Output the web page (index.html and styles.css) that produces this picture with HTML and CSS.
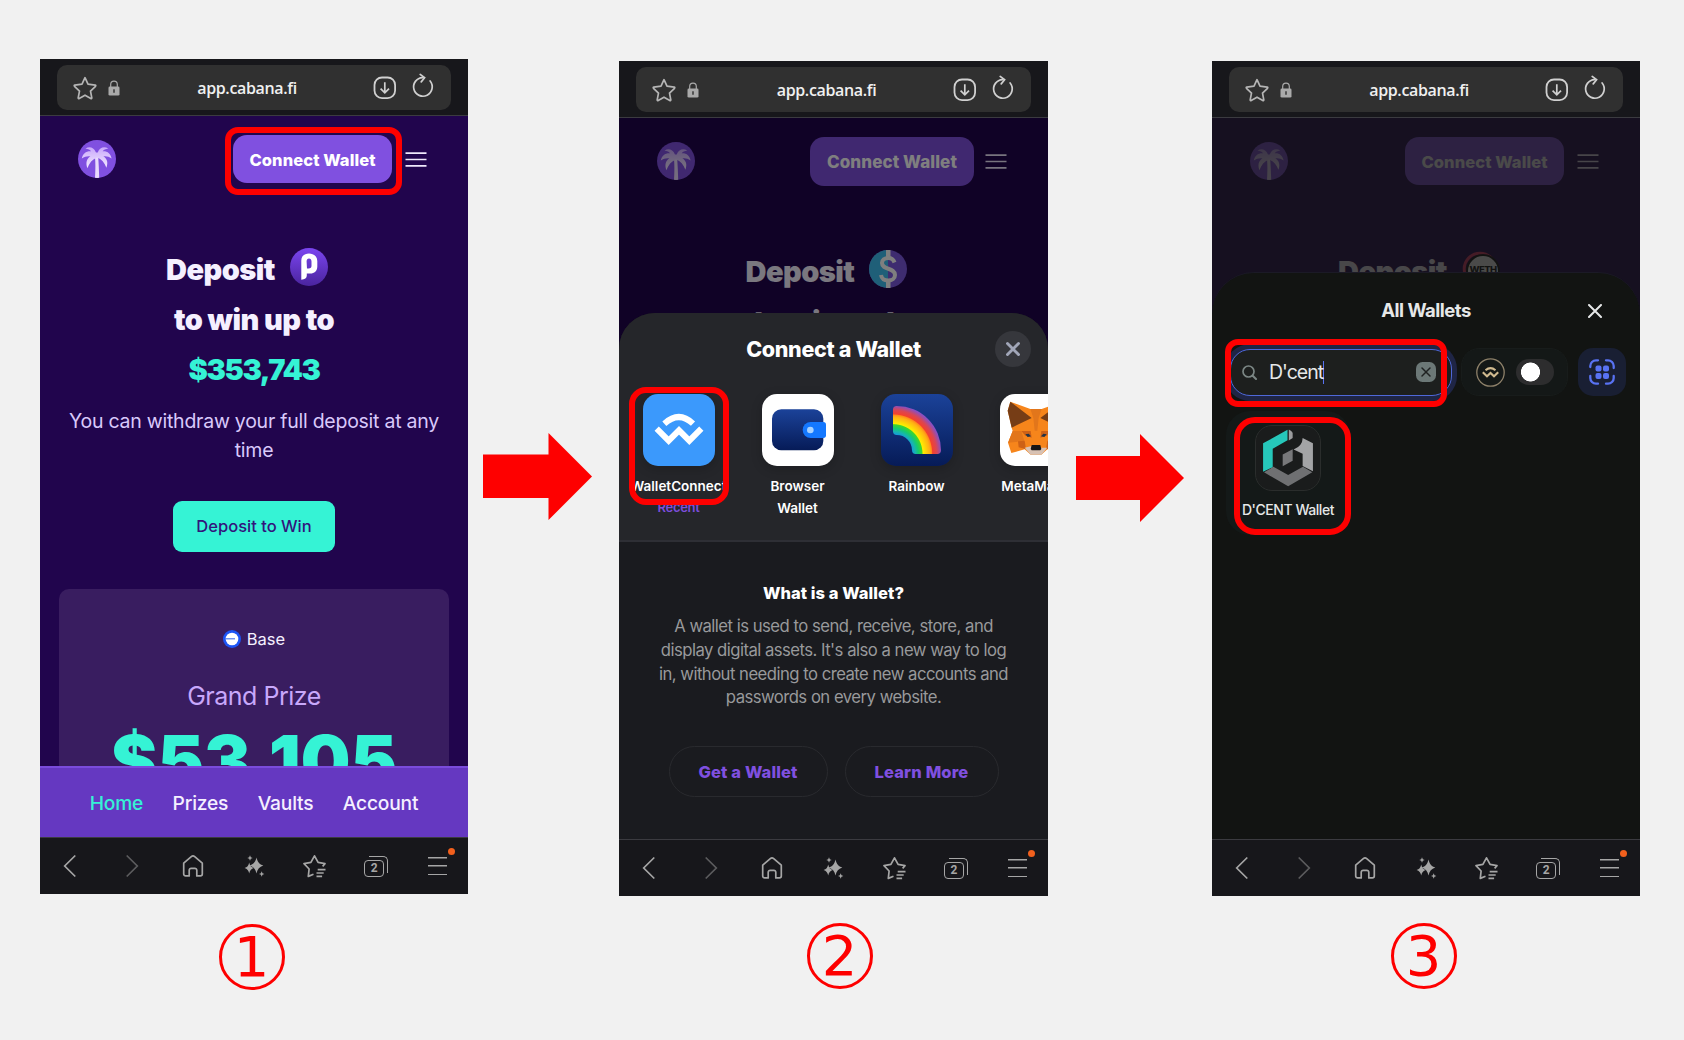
FILE: index.html
```html
<!DOCTYPE html>
<html lang="en">
<head>
<meta charset="utf-8">
<title>Connect a wallet in three steps</title>
<link rel="stylesheet" href="styles.css">
</head>
<body>
<svg class="defs" width="0" height="0" aria-hidden="true">
  <defs>
    <linearGradient id="violet" x1="0" y1="0" x2="0" y2="1"><stop offset="0" stop-color="#7b45f0"/><stop offset="1" stop-color="#4a249e"/></linearGradient>
    <linearGradient id="navy" x1="0" y1="0" x2="0" y2="1"><stop offset="0" stop-color="#1b4299"/><stop offset="1" stop-color="#061b57"/></linearGradient>
    <linearGradient id="frond" x1="0" y1="0" x2="0" y2="1"><stop offset="0" stop-color="#c9a8fb"/><stop offset="1" stop-color="#f3eaff"/></linearGradient>
    <radialGradient id="bow" gradientUnits="userSpaceOnUse" cx="849" cy="461" r="145">
      <stop offset=".4" stop-color="#149bd8"/><stop offset=".46" stop-color="#18b5b0"/><stop offset=".52" stop-color="#14c973"/><stop offset=".6" stop-color="#3fd52d"/><stop offset=".62" stop-color="#ffee00"/><stop offset=".76" stop-color="#ffb014"/><stop offset=".8" stop-color="#ff8a1c"/><stop offset=".82" stop-color="#f4412c"/><stop offset=".9" stop-color="#dc4550"/><stop offset="1" stop-color="#8a4fc0"/>
    </radialGradient>
    <symbol id="i-star" viewBox="0 0 24 24"><path d="M12 1.7l3 6.5 7.2.9c.6.1.8.8.3 1.2l-5 4.9 1.3 6.6c.1.6-.5 1-1 .7L12 19.2l-5.8 3.3c-.5.3-1.1-.1-1-.7l1.3-6.6-5-4.9c-.5-.4-.3-1.1.3-1.2L9 8.2z" fill="none" stroke="#b5b5b5" stroke-width="1.7" stroke-linejoin="round"/></symbol>
    <symbol id="i-lock" viewBox="0 0 12 16"><path d="M2.7 7V4.5a3.3 3.3 0 0 1 6.6 0V7" fill="none" stroke="#aaa" stroke-width="1.2"/><rect x=".5" y="6.6" width="11" height="9" rx="1.3" fill="#aaa"/><path d="M6 9.3v3.4" stroke="#303030" stroke-width="1.4"/></symbol>
    <symbol id="i-down" viewBox="0 0 24 24"><rect x="1.5" y="1.5" width="20.6" height="20.6" rx="7.5" fill="none" stroke="#d0d0d0" stroke-width="1.8"/><path d="M11.8 6.3v10.400M7.600 12.600l4.200 4.200 4.200-4.200" fill="none" stroke="#d0d0d0" stroke-width="1.700"/></symbol>
    <symbol id="i-reload" viewBox="0 0 24 26"><path d="M12.500 4.600a9.300 9.300 0 1 0 7.600 3.400" fill="none" stroke="#d0d0d0" stroke-width="1.700" stroke-linecap="round"/><path d="M10.200 1.400l4.400 3.300-3.400 4.200" fill="none" stroke="#d0d0d0" stroke-width="1.700" stroke-linecap="round"/></symbol>
    <symbol id="i-palm" viewBox="0 0 38 38">
      <circle cx="19" cy="19" r="19" fill="#8050e0"/>
      <path d="M17 17h3.200c.5 7 .8 13 1 20.800a19 19 0 0 1-4.200 0c.4-8 .6-14 0-20.800z" fill="#e9dafc"/>
      <path d="M18 12.500C15.500 7 11 6.200 7.500 8.800c3 .2 4.500 1 5.500 2.400-5-.3-8.300 2.300-9.200 7.300 2.800-2 5.600-2.600 8.600-2.200-3.900 2.700-4.900 6.700-3 12 1.800-5.300 4.900-9 9.600-10.800 4.600 1.600 7.600 5 9.400 10.300 1.900-5.300.9-8.800-3-11.500 3-.4 5.600.2 8.200 2.200-.9-5-4-7.600-8.900-7.300 1-1.400 2.600-2.200 5.600-2.400-3.600-2.600-8.400-1.800-10.600 3.700z" fill="url(#frond)"/>
    </symbol>
    <symbol id="i-menu" viewBox="0 0 22 15"><path d="M.5 1.200h21M.5 7.500h21M.5 13.800h21" stroke="#efe8fc" stroke-width="1.700"/></symbol>
    <symbol id="i-back" viewBox="0 0 24 24"><path d="M16.300 1.500L5.700 12l10.600 10.500" fill="none" stroke="#a6a6a6" stroke-width="1.700"/></symbol>
    <symbol id="i-fwd" viewBox="0 0 24 24"><path d="M6.700 1.500L17.300 12 6.700 22.500" fill="none" stroke="#5c5c5e" stroke-width="1.700"/></symbol>
    <symbol id="i-home" viewBox="0 0 24 24"><path d="M2.700 9.200L10.300 2.600a2.600 2.600 0 0 1 3.400 0l7.600 6.600V20a1.900 1.900 0 0 1-1.900 1.900h-3.600v-5.600a1.900 1.900 0 0 0-1.900-1.900h-3.800a1.900 1.900 0 0 0-1.900 1.900v5.600H4.600A1.900 1.900 0 0 1 2.700 20z" fill="none" stroke="#a6a6a6" stroke-width="1.700" stroke-linejoin="round"/></symbol>
    <symbol id="i-spark" viewBox="0 0 24 24" fill="#a6a6a6"><path d="M14.500 3.500c1 4.500 3 7 6.800 8-3.800 1.200-5.800 3.600-6.800 8-1-4.400-3-6.800-6.800-8 3.800-1 5.800-3.500 6.800-8z"/><path d="M7.200 8.500c.6 3.200 2 4.700 4.600 5.400-2.600.8-4 2.400-4.600 5.600-.6-3.200-2-4.800-4.600-5.600 2.600-.7 4-2.200 4.600-5.400z"/><path d="M8 1.200l.8 2 1.900.8-1.900.8-.8 2-.8-2L5.300 4l1.900-.8zM19.700 17.200l.8 2 1.900.8-1.900.8-.8 2-.8-2-1.900-.8 1.900-.8z"/></symbol>
    <symbol id="i-fav" viewBox="0 0 24 24" fill="none" stroke="#a6a6a6" stroke-width="1.700" stroke-linejoin="round"><path d="M10.500 20.200L5.300 22.400 6.100 15 1 9.700l6.900-1.300L11.500 1.800l3.600 6.600 6.900 1.300-2.400 2.700"/><path d="M14.700 15.700h7.800M13.500 19h7.200M13.500 22.300h5.600"/></symbol>
    <symbol id="i-qr" viewBox="0 0 26 26"><path d="M1.300 8V7A5.700 5.700 0 0 1 7 1.300h2M17 1.300h2A5.700 5.700 0 0 1 24.700 7v2M24.700 17v2a5.700 5.700 0 0 1-5.700 5.700h-2M9 24.700H7A5.700 5.700 0 0 1 1.300 19v-2" fill="none" stroke="#5872f2" stroke-width="2.300" stroke-linecap="round"/><g fill="#5872f2"><rect x="6.500" y="6.500" width="6" height="6" rx="2"/><rect x="14" y="6.500" width="6" height="6" rx="2"/><rect x="6.500" y="14" width="6" height="6" rx="2"/><rect x="14" y="14" width="6" height="6" rx="2"/></g></symbol>
  </defs>
</svg>

<main class="guide">
  <section class="step step-one">
    <div class="phone">
      <header class="browser-bar"><div class="address">
        <svg class="a-star"><use href="#i-star"/></svg><svg class="a-lock"><use href="#i-lock"/></svg>
        <span class="url">app.cabana.fi</span>
        <svg class="a-down"><use href="#i-down"/></svg><svg class="a-reload"><use href="#i-reload"/></svg>
      </div></header>
      <div class="view">
        <div class="page">
          <div class="site-head">
            <svg class="palm"><use href="#i-palm"/></svg>
            <div class="connect">Connect Wallet</div>
            <svg class="burger"><use href="#i-menu"/></svg>
          </div>
          <div class="hero">
            <div class="hero-line with-token"><span>Deposit</span>
              <svg class="token" viewBox="0 0 38 38"><circle cx="19" cy="19" r="19" fill="url(#violet)"/><path d="M11.300 31.800V12.500C11.300 8 14.500 5.500 19 5.500S27.300 8.300 27.300 13v5.500c0 4.500-3 7-7 7h-3.500v2c0 2.500-2 4-5.500 4.300zM17 20.500h1.700c1.800 0 2.800-1 2.800-2.700v-4.300c0-2-1-3-2.500-3s-2.400 1-2.400 3z" fill="#fff" fill-rule="evenodd"/></svg>
            </div>
            <div class="hero-line win">to win up to</div>
            <div class="hero-line amount">$353,743</div>
            <p class="note">You can withdraw your full deposit at any<br>time</p>
            <div class="deposit">Deposit to Win</div>
          </div>
          <div class="prize">
            <div class="chain"><svg class="base" viewBox="0 0 18 18"><circle cx="9" cy="9" r="9" fill="#1d55f5"/><circle cx="9" cy="9" r="6.300" fill="#fff"/><path d="M2 8.800h10" stroke="#4e7bee" stroke-width="1.200"/></svg><span>Base</span></div>
            <div class="prize-title">Grand Prize</div>
            <div class="prize-amount">$53,105</div>
          </div>
        </div>
        <nav class="tabs"><span class="active">Home</span><span>Prizes</span><span>Vaults</span><span>Account</span></nav>
      </div>
      <footer class="toolbar"><svg><use href="#i-back"/></svg><svg><use href="#i-fwd"/></svg><svg><use href="#i-home"/></svg><svg><use href="#i-spark"/></svg><svg><use href="#i-fav"/></svg><span class="pages">2</span><span class="more"></span></footer>
      <div class="mark mark-connect"></div>
    </div>
    <div class="number">1</div>
  </section>

  <svg class="arrow arrow-one" viewBox="0 0 109 87"><path d="M0 21.500h65.500V0L109 43.500 65.500 87V65H0z" fill="#fe0000"/></svg>

  <section class="step step-two">
    <div class="phone">
      <header class="browser-bar"><div class="address">
        <svg class="a-star"><use href="#i-star"/></svg><svg class="a-lock"><use href="#i-lock"/></svg>
        <span class="url">app.cabana.fi</span>
        <svg class="a-down"><use href="#i-down"/></svg><svg class="a-reload"><use href="#i-reload"/></svg>
      </div></header>
      <div class="view">
        <div class="page">
          <div class="site-head">
            <svg class="palm"><use href="#i-palm"/></svg>
            <div class="connect">Connect Wallet</div>
            <svg class="burger"><use href="#i-menu"/></svg>
          </div>
          <div class="hero">
            <div class="hero-line with-token"><span>Deposit</span>
              <svg class="token" viewBox="0 0 38 38"><circle cx="19" cy="19" r="19" fill="#7c58e0"/><path d="M19 0a19 19 0 0 0 0 38z" fill="#3fbff0"/><path d="M25.500 12.500C24.500 9.500 22.500 8 19.300 8c-3.800 0-6.300 2-6.300 5 0 7.500 13 4 13 12 0 3.300-2.800 5.500-6.700 5.500-4 0-6.700-2-7.300-5.500" fill="none" stroke="#fff" stroke-width="4"/><path d="M17 0h4.500v8H17zM17 31h4.500v7H17z" fill="#fff"/></svg>
            </div>
            <div class="hero-line win">to win up to</div>
          </div>
        </div>
        <div class="scrim"></div>
        <div class="sheet connect-sheet">
          <div class="sheet-top">
            <div class="sheet-head">Connect a Wallet<svg class="close" viewBox="0 0 36 36"><circle cx="18" cy="18" r="18" fill="#36373c"/><path d="M12.500 12.500l11 11M23.500 12.500l-11 11" stroke="#a1a6b8" stroke-width="2.900" stroke-linecap="round"/></svg></div>
            <div class="wallets">
              <div class="wallet"><svg class="tile" viewBox="98 282 216 216"><rect x="98" y="282" width="216" height="216" fill="#3b99fc"/><path d="M162 371q44-40 86 0M139 386l36 36 31-31 31 31 36-36" fill="none" stroke="#fff" stroke-width="18"/></svg><div class="label">WalletConnect</div><div class="recent">Recent</div></div>
              <div class="wallet"><svg class="tile" viewBox="456 282 216 216"><rect x="456" y="282" width="216" height="216" fill="#fff"/><rect x="486" y="328" width="154" height="123" rx="28" fill="url(#navy)"/><path d="M602 366h38q8 0 8 8v32q0 8-8 8h-38a24 24 0 0 1 0-48z" fill="#1478ff"/><circle cx="601" cy="390" r="10" fill="#a8d2ff"/></svg><div class="label two">Browser<br>Wallet</div></div>
              <div class="wallet"><svg class="tile" viewBox="813 282 216 216"><rect x="813" y="282" width="216" height="216" fill="url(#navy)"/><path d="M849 329q0-11 11-11A133 133 0 0 1 993 451q0 11-11 11H917q-11 0-11-11A46 46 0 0 0 860 405q-11 0-11-11z" fill="url(#bow)"/></svg><div class="label">Rainbow</div></div>
              <div class="wallet"><svg class="tile" viewBox="0 27 216 216"><rect y="27" width="216" height="216" fill="#fff"/>
                <path d="M31 50l60 22h34l60-22 8 27-12 51-3 10 14 35-10 31-40-11-18 16H92l-18-16-40 11-10-31 14-35-3-10-12-51z" fill="#f6851b"/>
                <path d="M31 50l64 49-60 29-12-51zM185 50l-64 49 60 29 12-51z" fill="#763d16"/>
                <path d="M24 173l14-35 26 0 9 30zM192 173l-14-35-26 0-9 30zM91 72h34l-9 27-4 38h-8l-4-38z" fill="#e2761b"/>
                <path d="M64 138l12 14 19 6-3-20zM152 138l-12 14-19 6 3-20zM54 169l20-2 4 26-22-6zM162 169l-20-2-4 26 22-6z" fill="#cd6116"/>
                <path d="M76 148l10-2 7 8-10 2zM140 148l-10-2-7 8 10 2z" fill="#233447"/>
                <path d="M74 188l18-4 16 8 16-4 18 0-18 21H92z" fill="#d7c1b3"/><path d="M95 180h26l3 12-3 4H95l-3-4z" fill="#161616"/></svg><div class="label">MetaMask</div></div>
            </div>
          </div>
          <div class="about">
            <div class="about-title">What is a Wallet?</div>
            <p class="about-text">A wallet is used to send, receive, store, and<br>display digital assets. It's also a new way to log<br>in, without needing to create new accounts and<br>passwords on every website.</p>
            <div class="about-actions"><div class="pill get">Get a Wallet</div><div class="pill learn">Learn More</div></div>
          </div>
        </div>
      </div>
      <footer class="toolbar"><svg><use href="#i-back"/></svg><svg><use href="#i-fwd"/></svg><svg><use href="#i-home"/></svg><svg><use href="#i-spark"/></svg><svg><use href="#i-fav"/></svg><span class="pages">2</span><span class="more"></span></footer>
      <div class="mark mark-wc"></div>
    </div>
    <div class="number">2</div>
  </section>

  <svg class="arrow arrow-two" viewBox="0 0 108 88"><path d="M0 22h64V0l44 44-44 44V66H0z" fill="#fe0000"/></svg>

  <section class="step step-three">
    <div class="phone">
      <header class="browser-bar"><div class="address">
        <svg class="a-star"><use href="#i-star"/></svg><svg class="a-lock"><use href="#i-lock"/></svg>
        <span class="url">app.cabana.fi</span>
        <svg class="a-down"><use href="#i-down"/></svg><svg class="a-reload"><use href="#i-reload"/></svg>
      </div></header>
      <div class="view">
        <div class="page">
          <div class="site-head">
            <svg class="palm"><use href="#i-palm"/></svg>
            <div class="connect">Connect Wallet</div>
            <svg class="burger"><use href="#i-menu"/></svg>
          </div>
          <div class="hero">
            <div class="hero-line with-token"><span>Deposit</span>
              <svg class="token" viewBox="0 0 38 38"><circle cx="18" cy="19" r="15.800" fill="none" stroke="#e8386a" stroke-width="3"/><circle cx="21" cy="21" r="16" fill="#fff" stroke="#111" stroke-width="2"/><text x="21" y="22.500" text-anchor="middle" class="weth">WETH</text></svg>
            </div>
          </div>
        </div>
        <div class="scrim"></div>
        <div class="sheet all-sheet">
          <div class="all-head">All Wallets<svg class="all-close" viewBox="0 0 14 14"><path d="M1 1l12 12M13 1L1 13" stroke="#e6e8e8" stroke-width="2" stroke-linecap="round"/></svg></div>
          <div class="filters">
            <div class="search"><svg class="lens" viewBox="0 0 15 15"><circle cx="6.500" cy="6.500" r="5.500" fill="none" stroke="#7b8684" stroke-width="1.700"/><path d="M10.700 10.700l3.300 3.300" stroke="#7b8684" stroke-width="2" stroke-linecap="round"/></svg><span class="query">D'cent</span><svg class="clear" viewBox="0 0 20 20"><rect width="20" height="20" rx="6.500" fill="#6c7877"/><path d="M6 6l8 8M14 6l-8 8" stroke="#1f2222" stroke-width="1.500" stroke-linecap="round"/></svg></div>
            <div class="certified"><svg class="seal" viewBox="0 0 29 29"><circle cx="14.500" cy="14.500" r="13.700" fill="none" stroke="#8d8069" stroke-width="1.300"/><path d="M9.500 12.300q5-4.300 10 0M6.800 14.300l4.200 4 3.500-3.300 3.500 3.300 4.200-4" fill="none" stroke="#cfb98f" stroke-width="2.100"/></svg><span class="switch"></span></div>
            <div class="qr"><svg class="qr-icon"><use href="#i-qr"/></svg></div>
          </div>
          <div class="result">
            <svg class="dcent" viewBox="165 316 199 199"><path d="M187 370l76-42v32l-46 27v57l-30 14z" fill="#26c7ba"/><path d="M267 327q12 6 12 12v14l-12 8z" fill="#9b9c9e"/><path d="M310 353l32 17v87l-32-17v-38l-28-13q28-12 28-36z" fill="#a3a4a6"/><path d="M248 405l31-17v36l-31 17z" fill="#77787a"/><path d="M190 460l29-17 46 25 46-25 29 17-75 43z" fill="#6f7072"/></svg>
            <span>D'CENT Wallet</span>
          </div>
        </div>
      </div>
      <footer class="toolbar"><svg><use href="#i-back"/></svg><svg><use href="#i-fwd"/></svg><svg><use href="#i-home"/></svg><svg><use href="#i-spark"/></svg><svg><use href="#i-fav"/></svg><span class="pages">2</span><span class="more"></span></footer>
      <div class="mark mark-search"></div>
      <div class="mark mark-dcent"></div>
    </div>
    <div class="number">3</div>
  </section>
</main>
</body>
</html>
```
FILE: styles.css
```css
* { box-sizing: border-box; }
body { margin: 0; background: #f1f1f1; font-family: Inter, "Liberation Sans", sans-serif; overflow: hidden; }
svg { display: block; flex: none; }
.defs { position: absolute; }
p { margin: 0; }
span { white-space: nowrap; }

.guide { display: flex; align-items: flex-start; width: 1684px; height: 1040px; padding: 59px 0 0 40px; }
.step { width: 428px; display: flex; flex-direction: column; align-items: center; flex: none; }
.step-two { width: 429px; margin: 2px 28px 0 27px; }
.step-three { margin: 2px 0 0 28px; }
.arrow-one { width: 109px; height: 87px; margin: 374px 0 0 15px; }
.arrow-two { width: 108px; height: 88px; margin-top: 375px; }

.number { width: 66px; height: 66px; margin: 30px 5px 0 0; border: 3px solid #fe0000; border-radius: 50%; color: #fe0000; font: 56px/60px "DejaVu Sans", sans-serif; text-align: center; }
.step-two .number { margin: 27px -12px 0 0; }
.step-three .number { margin-top: 27px; }

.phone { position: relative; width: 100%; height: 835px; display: flex; flex-direction: column; background: #17171b; }
.browser-bar { height: 57px; padding: 6px 17px 0; border-bottom: 1px solid #3b3b40; }
.address { height: 45px; border-radius: 10px; background: #303030; display: flex; align-items: center; padding: 0 17px 0 16px; }
.a-star { width: 24px; height: 24px; }
.a-lock { width: 12px; height: 16px; margin: 0 0 0 11px; }
.url { flex: 1; text-align: center; color: #f0f0f0; font: 600 16px/24px "Open Sans", sans-serif; letter-spacing: -.35px; padding-left: 1px; }
.a-down { width: 24px; height: 24px; margin-right: 13px; }
.a-reload { width: 24px; height: 26px; margin-top: -3px; }

.view { position: relative; flex: 1; min-height: 0; display: flex; flex-direction: column; overflow: hidden; background: #21054d; }
.page { flex: 1; min-height: 0; overflow: hidden; }
.site-head { height: 86px; display: flex; align-items: center; padding: 0 41px 0 38px; }
.palm { width: 38px; height: 38px; margin-right: auto; }
.connect { width: 159px; height: 48px; border-radius: 14px; background: #8050e0; color: #fff; font-size: 16.500px; font-weight: 800; line-height: 50px; letter-spacing: .1px; text-align: center; }
.step-two .connect { width: 164px; height: 49px; font-size: 17px; }
.burger { width: 22px; height: 15px; margin-left: 13px; }
.step-two .burger { margin-left: 11px; }

.hero { padding-top: 42px; display: flex; flex-direction: column; align-items: center; color: #f5f0ff; }
.hero-line { height: 50px; line-height: 51px; font-size: 29px; font-weight: 900; letter-spacing: -.55px; }
.with-token { display: flex; gap: 15px; padding-right: 14px; }
.token { width: 38px; height: 38px; margin-top: 4px; }
.amount { color: #35f3d5; letter-spacing: -1.400px; }
.note { margin-top: 13px; font-size: 19.500px; line-height: 28.500px; letter-spacing: -.25px; text-align: center; color: #d9c9fb; }
.deposit { width: 162px; height: 51px; margin-top: 37px; border-radius: 9px; background: #35f3d5; color: #32147c; font-size: 16.500px; font-weight: 500; line-height: 51px; text-align: center; }
.prize { height: 260px; margin: 37px 19px 0; padding-top: 38px; border-radius: 10px 10px 0 0; background: #391d60; text-align: center; }
.chain { height: 24px; display: flex; align-items: center; justify-content: center; gap: 6px; color: #f5f0ff; font-size: 16.500px; line-height: 24px; }
.base { width: 18px; height: 18px; }
.prize-title { margin-top: 30px; font-size: 25px; line-height: 30px; letter-spacing: -.5px; color: #c8a8fb; }
.prize-amount { margin-top: 15px; font-size: 70px; line-height: 70px; font-weight: 900; color: #35f3d5; }
.tabs { height: 71px; border-top: 2px solid #7a4bdc; background: #6538c1; display: flex; align-items: center; justify-content: center; gap: 29.500px; color: #f5f0ff; font-size: 19.200px; font-weight: 500; letter-spacing: -.2px; }
.active { color: #35f3d5; }

.toolbar { position: relative; height: 57px; border-top: 1px solid #3b3b40; background: #17171b; display: grid; grid-template-columns: repeat(7, 1fr); align-items: center; justify-items: center; }
.toolbar svg { width: 24px; height: 24px; }
.pages { position: relative; width: 20px; height: 17px; margin: 5px 4px 0 0; border: 1.500px solid #a6a6a6; border-radius: 4px; color: #a6a6a6; font: 700 12px/14px Roboto, sans-serif; text-align: center; }
.pages::after { content: ""; position: absolute; left: 4px; top: -5px; width: 18px; height: 16px; border: solid #a6a6a6; border-width: 1.500px 1.500px 0 0; border-radius: 0 5px 0 0; }
.more { position: relative; width: 19px; height: 18px; background: linear-gradient(#a6a6a6 0 0) 0 0/100% 1.500px no-repeat, linear-gradient(#a6a6a6 0 0) 0 50%/100% 1.500px no-repeat, linear-gradient(#a6a6a6 0 0) 0 100%/100% 1.500px no-repeat; }
.more::after { content: ""; position: absolute; right: -8px; top: -9px; width: 7px; height: 7px; border-radius: 50%; background: #f2601d; }

.mark { position: absolute; border: 6px solid #fe0000; }
.mark-connect { left: 185px; top: 68px; width: 177px; height: 68px; border-radius: 13px; }
.mark-wc { left: 10px; top: 326px; width: 100px; height: 118px; border-radius: 17px; }
.mark-search { left: 13px; top: 278px; width: 222px; height: 68px; border-radius: 13px; }
.mark-dcent { left: 22px; top: 356px; width: 117px; height: 118px; border-radius: 21px; }

.scrim { position: absolute; inset: 0; background: rgba(0, 0, 0, .5); }
.step-three .scrim { background: rgba(19, 20, 18, .77); }
.sheet { position: absolute; left: 0; right: 0; bottom: 0; overflow: hidden; }

.connect-sheet { height: 526px; border-radius: 36px 36px 0 0; background: #1a1b1f; }
.sheet-top { height: 229px; background: #25262a; border-bottom: 2px solid #2e2f35; }
.sheet-head { position: relative; height: 81px; padding-top: 21px; text-align: center; color: #fff; font-size: 21.500px; line-height: 30px; font-weight: 800; letter-spacing: -.33px; }
.close { position: absolute; right: 17px; top: 18px; width: 36px; height: 36px; }
.wallets { display: flex; gap: 24px; padding-left: 12px; }
.wallet { width: 95px; flex: none; display: flex; flex-direction: column; align-items: center; color: #fff; font-size: 13.500px; font-weight: 600; line-height: 21.500px; text-align: center; }
.tile { width: 72px; height: 72px; border-radius: 15px; box-shadow: 0 3px 12px rgba(0, 0, 0, .2); }
.label { width: 91px; height: 21px; margin-top: 10px; overflow: hidden; display: flex; justify-content: center; }
.label.two { display: block; height: 43px; }
.recent { color: #7c4ddb; font-size: 13px; letter-spacing: -.3px; }
.about { padding-top: 39px; display: flex; flex-direction: column; align-items: center; text-align: center; }
.about-title { color: #fff; font-size: 16.500px; line-height: 24px; font-weight: 800; letter-spacing: .07px; }
.about-text { margin-top: 10px; color: #98999b; font-size: 16.700px; line-height: 23.800px; letter-spacing: -.56px; word-spacing: .2px; }
.about-actions { display: flex; gap: 17px; margin-top: 36px; }
.pill { width: 159px; height: 51px; border: 1px solid #292a2e; border-radius: 26px; color: #8050e0; font-size: 16.500px; line-height: 50px; font-weight: 800; letter-spacing: .15px; }
.learn { width: 154px; }

.weth { font: 800 9.500px Inter, sans-serif; fill: #111; }
.all-sheet { height: 567px; border-radius: 42px 42px 0 0; background: #121412; border-top: 1px solid #1b1a26; color: #e6e8e8; }
.all-head { position: relative; height: 75px; padding-top: 25px; text-align: center; font-size: 18.500px; line-height: 24px; font-weight: 700; letter-spacing: -.5px; }
.all-close { position: absolute; right: 38px; top: 31px; width: 14px; height: 14px; }
.filters { display: flex; align-items: center; padding-left: 17.500px; }
.search { width: 222px; height: 47px; border: 1.500px solid #4f68d9; border-radius: 20px; background: #1d1f1e; box-shadow: 0 0 0 5px #1f2545; display: flex; align-items: center; padding: 0 15px 0 11px; }
.lens { width: 15px; height: 15px; }
.query { margin: 0 auto 0 12.500px; border-right: 1.500px solid #5872f2; font-size: 19.500px; line-height: 23px; letter-spacing: -1px; }
.clear { width: 20px; height: 20px; }
.certified { width: 107px; height: 48px; margin-left: 9.500px; border: 1px solid #181c1b; border-radius: 18px; background: #141817; display: flex; align-items: center; gap: 11.500px; padding-left: 13.500px; }
.seal { width: 29px; height: 29px; }
.switch { width: 38px; height: 26px; border-radius: 13px; background: radial-gradient(circle at 14.500px 13px, #fff 9.200px, transparent 9.800px) #2d2d2e; }
.qr { width: 48px; height: 48px; margin-left: 9.500px; border-radius: 15px; background: #191f33; display: grid; place-items: center; }
.qr-icon { width: 26px; height: 26px; }
.result { width: 124px; height: 124px; margin: 15px 0 0 14px; padding-top: 14px; border-radius: 24px; background: #141918; display: flex; flex-direction: column; align-items: center; font-size: 14px; line-height: 20px; font-weight: 500; letter-spacing: -.45px; }
.dcent { width: 66px; height: 66px; margin-bottom: 9px; border: 1px solid #2a2d2c; border-radius: 17px; background: #1a1c1c; }
```
